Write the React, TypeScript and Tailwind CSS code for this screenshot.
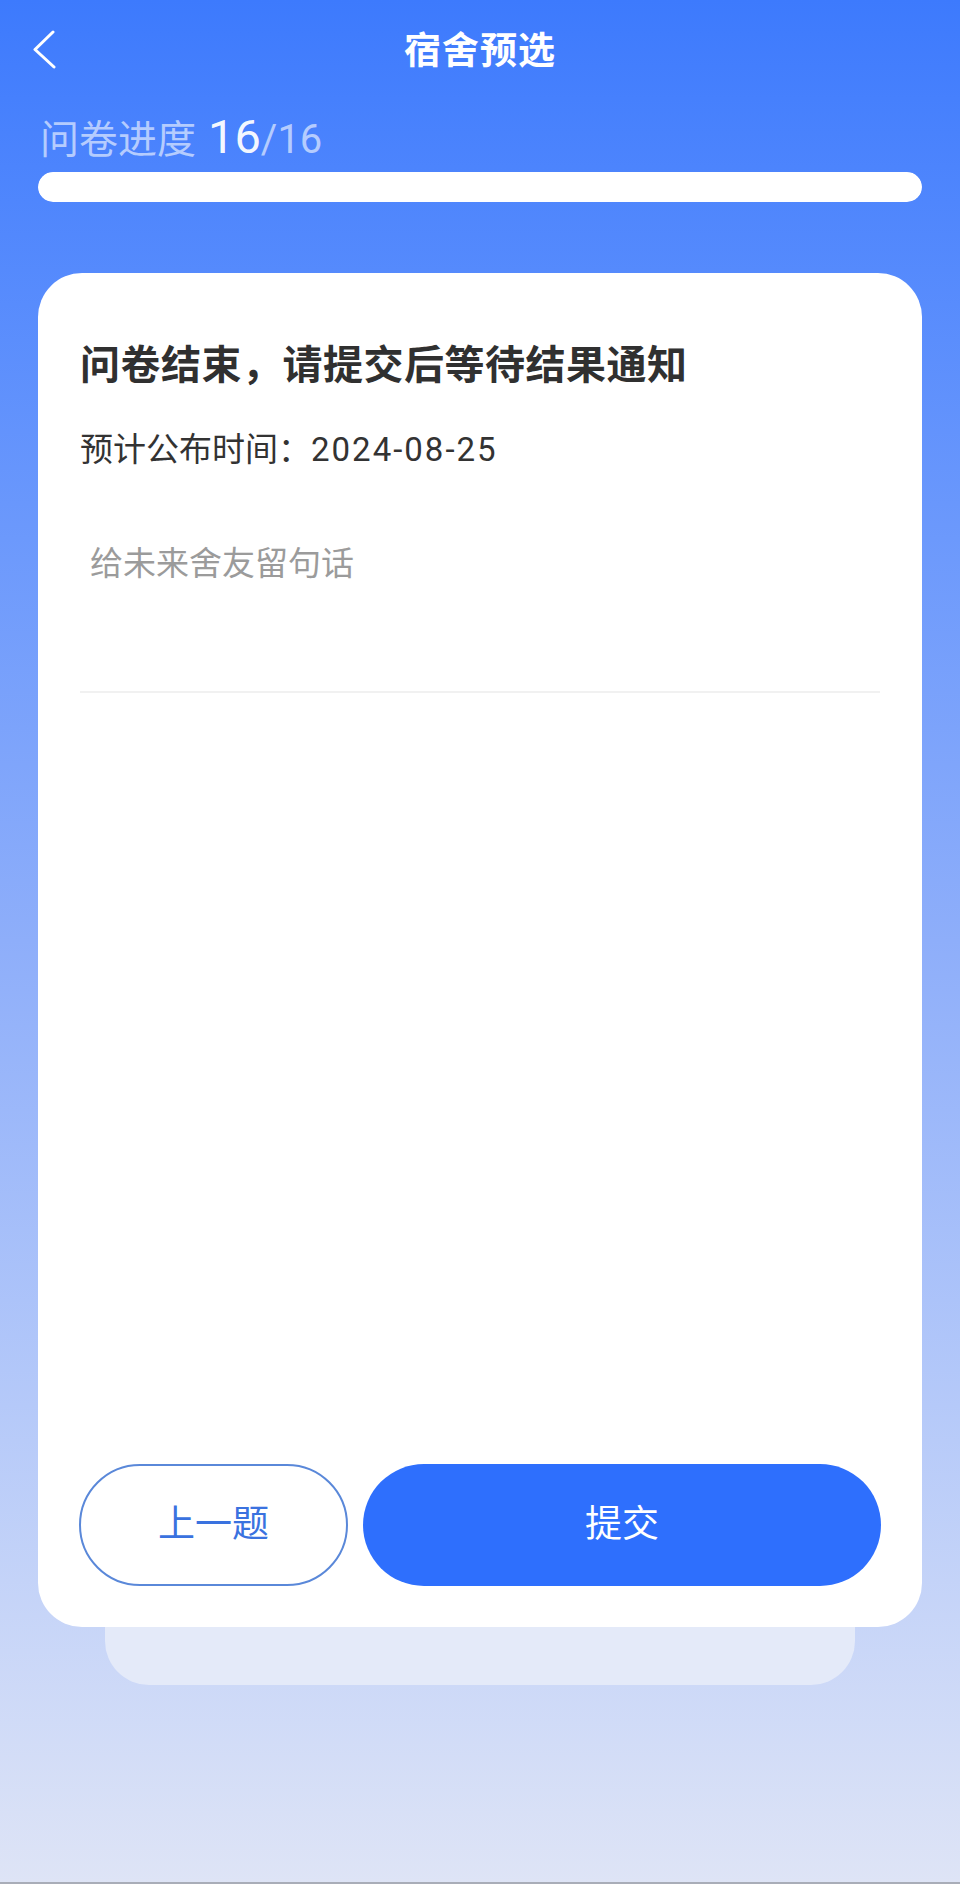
import { useState } from "react"

const font = "font-['Roboto','Noto_Sans_CJK_SC',sans-serif]"

const App = () => {
  const [message, setMessage] = useState("")
  const current = 16
  const total = 16

  return (
    <div
      className={`${font} w-[960px] h-[1884px] flex flex-col overflow-hidden bg-gradient-to-b from-[#3d7afd] via-[#8eaefa] to-[#dee4f6] border-b-2 border-[#a9adb8]`}
    >
      {/* Barra superior */}
      <div className="h-[104px] grid grid-cols-[1fr_auto_1fr] items-center">
        <div className="pl-[32px] pb-[4px]">
          <svg width="26" height="40" viewBox="0 0 26 40" fill="none">
            <polyline
              points="21,2 3,19.5 22,37"
              stroke="white"
              strokeWidth="3"
              strokeLinecap="round"
              strokeLinejoin="round"
            />
          </svg>
        </div>
        <h1 className="text-[37px] font-bold text-white tracking-[1px]">宿舍预选</h1>
        <div />
      </div>

      {/* Progreso */}
      <div className="mt-[8px] px-[40px] h-[50px] flex items-baseline text-white/60">
        <span className="text-[39px] leading-[50px]">问卷进度</span>
        <span className="ml-[12px] text-[47px] leading-[50px] text-white/95">{current}</span>
        <span className="text-[40px] leading-[50px]">/{total}</span>
      </div>
      <div className="mt-[10px] mx-[38px] h-[30px] rounded-full bg-white/30 overflow-hidden">
        <div
          className="h-full rounded-full bg-white"
          style={{ width: `${(current / total) * 100}%` }}
        />
      </div>

      {/* Tarjeta */}
      <div className="mt-[71px] mx-[38px] h-[1354px] rounded-[44px] bg-white flex flex-col">
        <div className="px-[42px] pt-[66px]">
          <h2 className="text-[40px] leading-[54px] font-bold text-[#303030] tracking-[0.5px]">
            问卷结束，请提交后等待结果通知
          </h2>
          <p className="mt-[35px] text-[33px] leading-[44px] text-[#333333]">
            预计公布时间：<span className="tracking-[2px]">2024-08-25</span>
          </p>
          <textarea
            value={message}
            onChange={(e) => setMessage(e.target.value)}
            placeholder="给未来舍友留句话"
            className="mt-[70px] w-full h-[142px] px-[10px] resize-none outline-none text-[33px] leading-[44px] text-[#333333] placeholder:text-[#9b9b9b] bg-transparent"
          />
          <div className="h-[2px] bg-[#f1f1f1]" />
        </div>

        <div className="mt-auto px-[41px] pb-[41px] flex gap-[15px]">
          <button className="w-[269px] h-[122px] rounded-full border-2 border-[#5a88d9] text-[37px] text-[#3a72df]">
            上一题
          </button>
          <button className="flex-1 h-[122px] rounded-full bg-[#2e6ffd] text-[37px] text-white">
            提交
          </button>
        </div>
      </div>
      <div className="mx-[105px] h-[58px] rounded-b-[44px] bg-[#e4eaf9]" />
    </div>
  )
}

export default App
